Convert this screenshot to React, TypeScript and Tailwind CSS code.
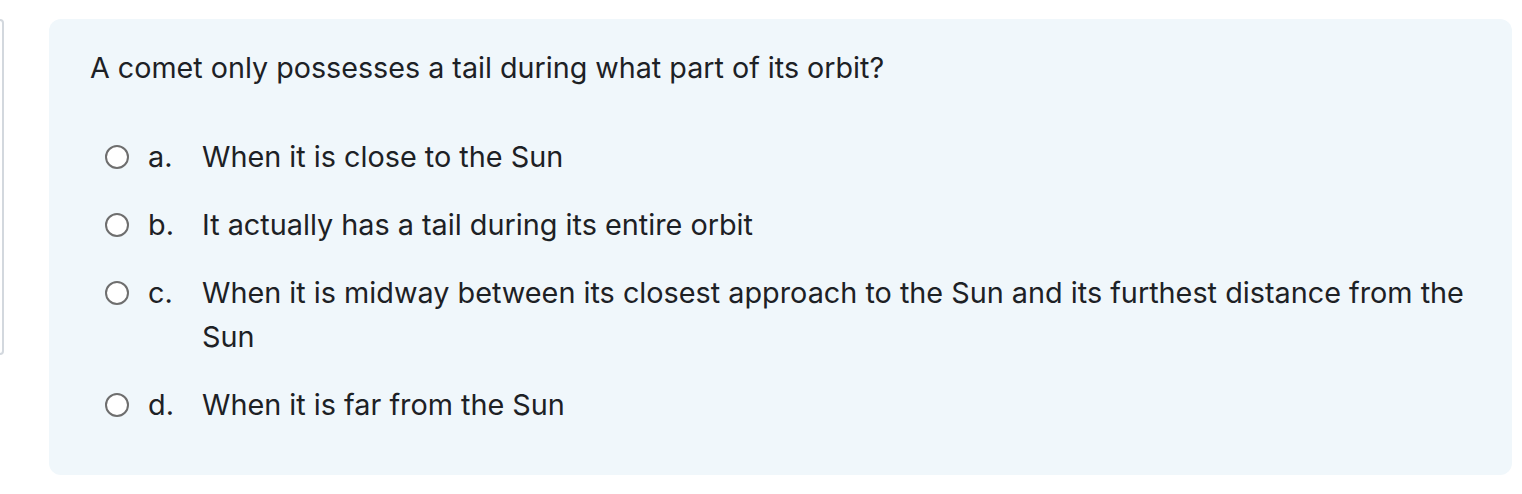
import React from "react"

const options = [
  { key: "a.", text: "When it is close to the Sun" },
  { key: "b.", text: "It actually has a tail during its entire orbit" },
  { key: "c.", text: "When it is midway between its closest approach to the Sun and its furthest distance from the Sun" },
  { key: "d.", text: "When it is far from the Sun" },
]

export default function App() {
  return (
    <div className="flex items-start bg-white pt-[19px] h-[494px] w-[1522px] overflow-hidden text-[#1d2125]" style={{ fontFamily: "Inter, 'Liberation Sans', sans-serif" }}>
      <div className="w-[4px] h-[336px] shrink-0 border-r-2 border-y-2 border-[#d3d8de] rounded-r-md" />
      <div className="ml-[45px] w-[1463px] h-[456px] shrink-0 rounded-xl bg-[#f0f7fb] pl-[41px] pr-[30px] pt-[27px]">
        <div className="text-[28.7px] leading-[44px]">A comet only possesses a tail during what part of its orbit?</div>
        <div className="mt-[45px] flex flex-col gap-[24px]">
          {options.map((o) => (
            <div key={o.key} className="flex items-start text-[28.8px] leading-[44px]">
              <span className="ml-[15px] mt-[10px] w-[24px] h-[24px] shrink-0 rounded-full border-2 border-[#6e6e6e] bg-white" />
              <span className="ml-[19px] w-[54px] shrink-0">{o.key}</span>
              <span className="flex-1">{o.text}</span>
            </div>
          ))}
        </div>
      </div>
    </div>
  )
}
